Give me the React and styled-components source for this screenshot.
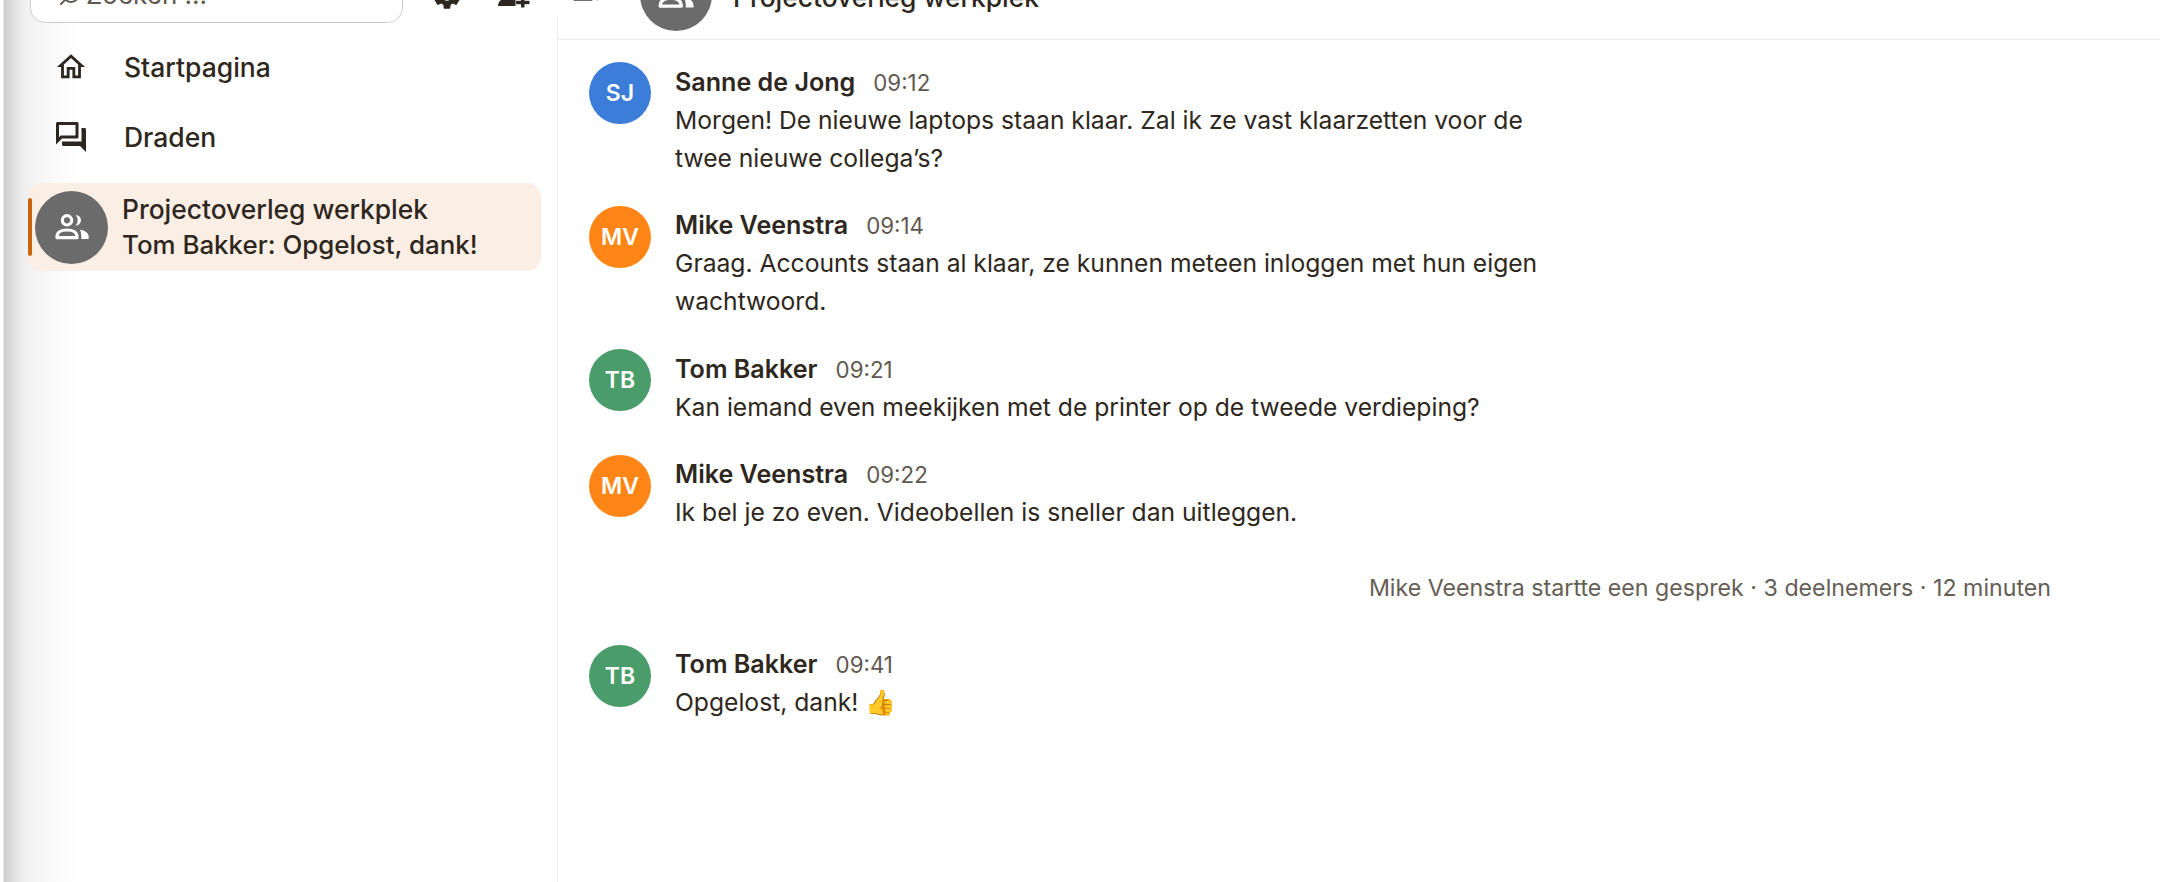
import React from "react";
import styled, { createGlobalStyle } from "styled-components";
import { Search } from "lucide-react";
import { MdOutlineHome, MdOutlineForum, MdSettings } from "react-icons/md";

const GlobalStyle = createGlobalStyle`
  html, body {
    margin: 0;
    padding: 0;
    height: 100%;
    overflow: hidden;
    background: #ffffff;
  }
  #root {
    height: 100%;
  }
`;

const messages = [
  { initials: "SJ", color: "#3b7dd8", name: "Sanne de Jong", time: "09:12", lines: ["Morgen! De nieuwe laptops staan klaar. Zal ik ze vast klaarzetten voor de", "twee nieuwe collega’s?"] },
  { initials: "MV", color: "#ff8616", name: "Mike Veenstra", time: "09:14", lines: ["Graag. Accounts staan al klaar, ze kunnen meteen inloggen met hun eigen", "wachtwoord."] },
  { initials: "TB", color: "#4a9d6a", name: "Tom Bakker", time: "09:21", lines: ["Kan iemand even meekijken met de printer op de tweede verdieping?"] },
  { initials: "MV", color: "#ff8616", name: "Mike Veenstra", time: "09:22", lines: ["Ik bel je zo even. Videobellen is sneller dan uitleggen."] },
];

const GroupIcon = ({ size }) => (
  <svg width={size} height={size} viewBox="0 0 24 24" fill="none">
    <circle cx="9" cy="8" r="2.8" stroke="currentColor" strokeWidth="1.9" />
    <path d="M14.2 4.8a3.2 3.2 0 0 1 0 6.4a5.2 5.2 0 0 0 0-6.4z" fill="currentColor" />
    <path d="M3 18.4v-.6c0-2.6 2.8-4 6-4s6 1.400 6 4v.6z" stroke="currentColor" strokeWidth="1.9" strokeLinejoin="round" />
    <path d="M16.800 13.600c2.800.4 5.200 1.800 5.200 4.200v1.400h-4.400v-1.400c0-1.700-.3-3-.8-4.200z" fill="currentColor" />
  </svg>
);

const AddPersonIcon = () => (
  <svg width="34" height="34" viewBox="0 0 34 34" fill="currentColor">
    <circle cx="14" cy="10" r="6.500" />
    <path d="M1 28c0-5.500 6-9.500 13-9.500c1.500 0 3 .2 4.500.5v9z" />
    <rect x="24" y="14" width="3.500" height="15.500" />
    <rect x="19" y="22.800" width="13.500" height="3.400" />
  </svg>
);

const App = () => (
  <>
    <GlobalStyle />
    <Page>
      <Sidebar>
        <SearchRow>
          <SearchBox>
            <SearchGlyph size={24} />
            <span>Zoeken ...</span>
          </SearchBox>
          <ToolIcons>
            <MdSettings size={32} />
            <AddPersonIcon />
            <ComposeIcon viewBox="0 0 24 24">
              <rect x="2" y="13" width="14" height="2.500" />
              <rect x="2" y="7" width="14" height="2.500" />
              <circle cx="20" cy="14" r="1.200" />
            </ComposeIcon>
          </ToolIcons>
        </SearchRow>
        <NavItem>
          <NavIcon><MdOutlineHome size={34} /></NavIcon>
          Startpagina
        </NavItem>
        <NavItem>
          <NavIcon><MdOutlineForum size={36} /></NavIcon>
          Draden
        </NavItem>
        <ActiveChat>
          <Marker />
          <ChatAvatar><GroupIcon size={40} /></ChatAvatar>
          <ChatText>
            <ChatTitle>Projectoverleg werkplek</ChatTitle>
            <ChatPreview>Tom Bakker: Opgelost, dank!</ChatPreview>
          </ChatText>
        </ActiveChat>
      </Sidebar>
      <Main>
        <Header>
          <HeaderAvatar><GroupIcon size={42} /></HeaderAvatar>
          <HeaderTitle>Projectoverleg werkplek</HeaderTitle>
        </Header>
        <Feed>
          {messages.map((m, i) => (
            <Message key={i} {...m} />
          ))}
          <CallNote>Mike Veenstra startte een gesprek · 3 deelnemers · 12 minuten</CallNote>
          <Message
            initials="TB"
            color="#4a9d6a"
            name="Tom Bakker"
            time="09:41"
            lines={["Opgelost, dank! 👍"]}
          />
        </Feed>
      </Main>
    </Page>
  </>
);

const Message = ({ initials, color, name, time, lines }) => (
  <MessageRow>
    <Avatar $color={color}>{initials}</Avatar>
    <div>
      <MetaLine>
        <Name>{name}</Name>
        <Time>{time}</Time>
      </MetaLine>
      {lines.map((line) => (
        <Body key={line}>{line}</Body>
      ))}
    </div>
  </MessageRow>
);

export default App;

const Page = styled.div`
  display: flex;
  height: 882px;
  font-family: Inter, "Liberation Sans", sans-serif;
  color: #2e2720;
  background: #ffffff;
  overflow: hidden;
`;

const Sidebar = styled.aside`
  position: relative;
  width: 558px;
  flex-shrink: 0;
  box-sizing: border-box;
  padding-left: 28px;
  background: linear-gradient(
    90deg,
    #ffffff 0,
    #ffffff 3px,
    #cdcdcd 4px,
    #eeeeee 22px,
    #fafafa 50px,
    #ffffff 80px
  );

  /* divider starts just under the top toolbar */
  &::after {
    content: "";
    position: absolute;
    top: 16px;
    right: 0;
    bottom: 0;
    width: 1px;
    background: #eeeeee;
  }
`;

const SearchRow = styled.div`
  display: flex;
  align-items: flex-start;
  height: 22px;
  margin-bottom: 10px;
`;

const SearchBox = styled.div`
  display: flex;
  align-items: center;
  gap: 4px;
  flex-shrink: 0;
  box-sizing: border-box;
  width: 373px;
  height: 57px;
  margin: -34px 0 0 2px;
  padding: 0 0 0 27px;
  font-size: 26px;
  color: #5f5850;
  background: #ffffff;
  border: 1.5px solid #cdcdcd;
  border-radius: 15px;
`;

const SearchGlyph = styled(Search)`
  color: #5f5850;
  transform: scaleX(-1);
`;

const ToolIcons = styled.div`
  display: flex;
  align-items: flex-end;
  gap: 34px;
  height: 12px;
  margin-left: 28px;
`;

const ComposeIcon = styled.svg`
  width: 32px;
  height: 32px;
  margin-left: 6px;
  fill: currentColor;
`;

const NavItem = styled.div`
  display: flex;
  align-items: center;
  height: 70px;
  font-size: 26.5px;
  font-weight: 500;
`;

const NavIcon = styled.div`
  display: flex;
  justify-content: center;
  width: 40px;
  margin: 0 33px 0 23px;
`;

const ActiveChat = styled.div`
  position: relative;
  display: flex;
  align-items: center;
  gap: 14px;
  box-sizing: border-box;
  width: 513px;
  height: 88px;
  margin-top: 11px;
  padding-left: 7px;
  background: #fbeee5;
  border-radius: 14px;
`;

const Marker = styled.span`
  position: absolute;
  left: 0;
  top: 15px;
  width: 4px;
  height: 58px;
  background: #c9640e;
  border-radius: 2px;
`;

const ChatAvatar = styled.div`
  display: flex;
  align-items: center;
  justify-content: center;
  width: 73px;
  height: 73px;
  color: #ffffff;
  background: #6b6b6b;
  border-radius: 50%;
`;

const ChatText = styled.div`
  line-height: 36.5px;
  font-weight: 500;
`;

const ChatTitle = styled.div`
  font-size: 26.4px;
`;

const ChatPreview = styled.div`
  font-size: 25.9px;
`;

const Main = styled.main`
  flex: 1;
  min-width: 0;
`;

const Header = styled.header`
  display: flex;
  align-items: center;
  gap: 21px;
  box-sizing: border-box;
  height: 40px;
  padding-left: 82px;
  border-bottom: 1px solid #ececec;
`;

const HeaderAvatar = styled.div`
  display: flex;
  align-items: center;
  justify-content: center;
  flex-shrink: 0;
  width: 72px;
  height: 72px;
  margin-top: -50px;
  color: #ffffff;
  background: #6b6b6b;
  border-radius: 50%;
`;

const HeaderTitle = styled.div`
  margin-top: -45px;
  font-size: 26.4px;
  font-weight: 500;
`;

const Feed = styled.div`
  padding: 23.5px 0 0 31px;
`;

const MessageRow = styled.div`
  display: flex;
  gap: 24px;
  margin-bottom: 30.5px;
`;

const Avatar = styled.div`
  display: flex;
  align-items: center;
  justify-content: center;
  flex-shrink: 0;
  width: 62px;
  height: 62px;
  margin-top: -1.5px;
  font-size: 23px;
  font-weight: 600;
  color: #ffffff;
  background: ${(p) => p.$color};
  border-radius: 50%;
`;

const MetaLine = styled.div`
  display: flex;
  align-items: baseline;
  gap: 18px;
  height: 37px;
  line-height: 36px;
`;

const Name = styled.span`
  font-size: 25.1px;
  font-weight: 600;
`;

const Time = styled.span`
  font-size: 22.3px;
  color: #5f5850;
`;

const Body = styled.div`
  font-size: 24.65px;
  line-height: 38px;
`;

const CallNote = styled.div`
  width: 1462px;
  margin: 39px 0 40px;
  text-align: right;
  font-size: 23.2px;
  line-height: 36px;
  color: #655e55;
`;
